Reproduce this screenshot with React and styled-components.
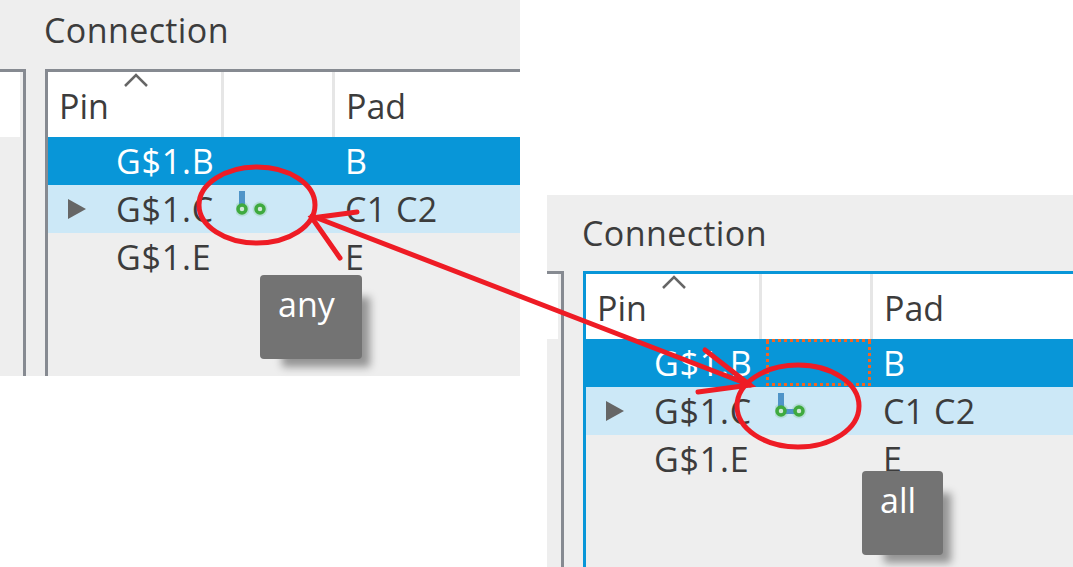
import styled, { createGlobalStyle } from "styled-components";

const GlobalStyle = createGlobalStyle`
  html, body {
    margin: 0;
    background: #fff;
  }
  * {
    box-sizing: border-box;
  }
`;

const Canvas = styled.div`
  position: relative;
  width: 1073px;
  height: 567px;
  overflow: hidden;
  font-family: "Open Sans", "Liberation Sans", sans-serif;
  font-size: 34px;
  color: #3c3c3c;
`;

const Panel = styled.section`
  position: absolute;
  left: ${(p) => p.$left}px;
  top: ${(p) => p.$top}px;
  width: ${(p) => p.$width}px;
  height: ${(p) => p.$height}px;
  display: flex;
  flex-direction: column;
  background: #eeeeee;
  overflow: hidden;
`;

const Title = styled.div`
  flex: none;
  height: ${(p) => p.$height}px;
  padding-left: ${(p) => p.$inset - 1}px;
  padding-top: ${(p) => p.$offset}px;
  line-height: 40px;
  letter-spacing: 0.4px;
`;

const Body = styled.div`
  flex: 1;
  display: flex;
  gap: 19px;
  min-height: 0;
`;

const Sliver = styled.div`
  flex: none;
  width: ${(p) => p.$width}px;
  border-top: 3px solid #868a91;
  border-right: 3px solid #868a91;
  padding-right: 3px;
`;

const SliverHead = styled.div`
  height: 65px;
  background: #fff;
`;

const Table = styled.div`
  flex: 1;
  min-width: 0;
  border-top: 3px solid ${(p) => (p.$focused ? "#0896d8" : "#868a91")};
  border-left: 3px solid ${(p) => (p.$focused ? "#0896d8" : "#868a91")};
`;

const Grid = styled.div`
  display: grid;
  grid-template-columns: 176px 111px 1fr;
  height: ${(p) => p.$height}px;
  background: ${(p) => p.$bg};
  color: ${(p) => p.$color};
  line-height: 1;
`;

const HeadCell = styled.div`
  position: relative;
  display: flex;
  align-items: center;
  padding: 3px 0 0 ${(p) => p.$pad}px;
  border-right: ${(p) => (p.$divider ? "3px solid #e6e6e6" : "none")};
`;

const SortCaret = styled.svg`
  position: absolute;
  left: 75px;
  top: 0;
  width: 26px;
  height: 15px;
`;

const PinCell = styled.div`
  display: flex;
  align-items: center;
  letter-spacing: 0.8px;
`;

const ExpanderSlot = styled.div`
  flex: none;
  width: 68px;
  padding-left: 20px;
`;

const Expander = styled.div`
  width: 0;
  height: 0;
  border-left: 18px solid #666;
  border-top: 10px solid transparent;
  border-bottom: 10px solid transparent;
`;

const LinkCell = styled.div`
  display: flex;
  align-items: center;
  padding-left: ${(p) => (p.$focused ? 13 : 12)}px;
`;

const FocusCell = styled.div`
  padding-left: 4px;
`;

const FocusBox = styled.div`
  width: 105px;
  height: 47px;
  background:
    repeating-linear-gradient(90deg, #f26522 0 3px, transparent 3px 6px) top / 100% 3px no-repeat,
    repeating-linear-gradient(90deg, #f26522 0 3px, transparent 3px 6px) bottom / 100% 3px no-repeat,
    repeating-linear-gradient(0deg, #f26522 0 3px, transparent 3px 6px) left / 3px 100% no-repeat,
    repeating-linear-gradient(0deg, #f26522 0 3px, transparent 3px 6px) right / 3px 100% no-repeat;
`;

const PadCell = styled.div`
  display: flex;
  align-items: center;
  padding-left: 10px;
  letter-spacing: 0.4px;
  white-space: pre;
`;

const Tooltip = styled.div`
  position: absolute;
  left: ${(p) => p.$left}px;
  top: ${(p) => p.$top}px;
  width: ${(p) => p.$width}px;
  height: 84px;
  padding: 9px 0 0 ${(p) => p.$pad}px;
  border-radius: 4px;
  background: #737373;
  color: #fff;
  line-height: 40px;
  box-shadow: 15px 15px 8px -7px rgba(0, 0, 0, 0.38);
`;

const Annotations = styled.svg`
  position: absolute;
  left: 0;
  top: 0;
  width: 1073px;
  height: 567px;
  pointer-events: none;
`;

const LinkIcon = ({ joined }) => (
  <svg width="36" height="40" viewBox="0 0 36 40">
    <circle cx="6" cy="20" r="7.5" fill="#3faa3f" fillOpacity="0.16" />
    <circle cx="24" cy="20" r="7.5" fill="#3faa3f" fillOpacity="0.16" />
    <rect x="3" y="2" width="6" height="14" fill="#4f94c8" />
    {joined && <rect x="8" y="18" width="12" height="5" fill="#4f94c8" />}
    <circle cx="6" cy="20" r="4" fill="#cfe8d8" stroke="#3faa3f" strokeWidth="3.5" />
    <circle cx="24" cy="20" r="4" fill="#cfe8d8" stroke="#3faa3f" strokeWidth="3.5" />
  </svg>
);

const rows = [
  { pin: "G$1.B", pad: "B", bg: "#0896d8", color: "#fff" },
  { pin: "G$1.C", pad: "C1 C2", bg: "#cce8f7", color: "#3c3c3c", open: true },
  { pin: "G$1.E", pad: "E", bg: "#eeeeee", color: "#3c3c3c" },
];

const ConnectionPanel = ({ left, top, width, height, inset, titleHeight, titleOffset, focused }) => (
  <Panel $left={left} $top={top} $width={width} $height={height}>
    <Title $inset={inset} $height={titleHeight} $offset={titleOffset}>Connection</Title>
    <Body>
      <Sliver $width={inset - 19}>
        <SliverHead />
      </Sliver>
      <Table $focused={focused}>
        <Grid $height={65} $bg="#fff" $color="#3c3c3c">
          <HeadCell $pad={11} $divider>
            Pin
            <SortCaret viewBox="0 0 26 15">
              <path d="M2 14 L13 3 L24 14" fill="none" stroke="#666" strokeWidth="2.5" />
            </SortCaret>
          </HeadCell>
          <HeadCell $divider />
          <HeadCell $pad={11}>Pad</HeadCell>
        </Grid>
        {rows.map((row) => (
          <Grid key={row.pin} $height={48} $bg={row.bg} $color={row.color}>
            <PinCell>
              <ExpanderSlot>{row.open && <Expander />}</ExpanderSlot>
              {row.pin}
            </PinCell>
            {row.open && (
              <LinkCell $focused={focused}>
                <LinkIcon joined={focused} />
              </LinkCell>
            )}
            {!row.open && (
              <FocusCell>{focused && row.pad === "B" && <FocusBox />}</FocusCell>
            )}
            <PadCell>{row.pad}</PadCell>
          </Grid>
        ))}
      </Table>
    </Body>
  </Panel>
);

export default function App() {
  return (
    <Canvas>
      <GlobalStyle />
      <ConnectionPanel left={0} top={0} width={520} height={376} inset={45} titleHeight={69} titleOffset={10} />
      <ConnectionPanel left={547} top={195} width={526} height={372} inset={36} titleHeight={76} titleOffset={18} focused />
      <Tooltip $left={260} $top={275} $width={102} $pad={18}>any</Tooltip>
      <Tooltip $left={862} $top={471} $width={81} $pad={18}>all</Tooltip>
      <Annotations viewBox="0 0 1073 567">
        <g fill="none" stroke="#ee1c25" strokeWidth="5" strokeLinecap="round">
          <ellipse cx="257" cy="205" rx="58" ry="38" />
          <ellipse cx="798" cy="406" rx="61" ry="41" />
          <path d="M312 216 L750 385" />
          <path d="M357 212 L312 218 L340 258" />
          <path d="M705 350 L750 385 L698 392" />
        </g>
      </Annotations>
    </Canvas>
  );
}
